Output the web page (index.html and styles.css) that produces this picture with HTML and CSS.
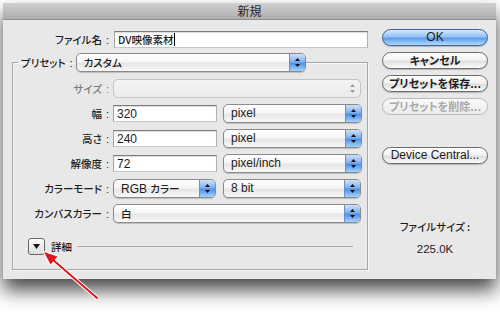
FILE: index.html
```html
<!DOCTYPE html>
<html lang="ja">
<head>
    <meta charset="UTF-8">
    <meta name="viewport" content="width=device-width, initial-scale=1.0">
    <title>新規</title>
    <link rel="stylesheet" href="styles.css">
</head>
<body>
    <div class="page">
        <div class="window">
            <div class="titlebar">新規</div>
            <div class="content">
                <div class="main">
                    <div class="name-row">
                        <label class="lbl" for="filename">ファイル名<b>:</b></label>
                        <div class="field name" id="filename"><span class="jp">DV映像素材</span><span class="caret"></span></div>
                    </div>

                    <fieldset class="group">
                        <legend>
                            <span class="lbl preset-lbl">プリセット<b>:</b></span>
                            <div class="popup preset"><span class="val jp">カスタム</span><span class="arrows"><svg width="5" height="9" viewBox="0 0 5 9"><polygon points="2.5,0 5,3 0,3" /><polygon points="0,6 5,6 2.5,9" /></svg></span></div>
                        </legend>

                        <div class="row">
                            <span class="lbl dim">サイズ<b>:</b></span>
                            <div class="popup full disabled"><span class="val"></span><span class="arrows"><svg width="5" height="9" viewBox="0 0 5 9"><polygon points="2.5,0 5,3 0,3" /><polygon points="0,6 5,6 2.5,9" /></svg></span></div>
                        </div>
                        <div class="row">
                            <span class="lbl">幅<b>:</b></span>
                            <div class="field num">320</div>
                            <div class="popup unit"><span class="val">pixel</span><span class="arrows"><svg width="5" height="9" viewBox="0 0 5 9"><polygon points="2.5,0 5,3 0,3" /><polygon points="0,6 5,6 2.5,9" /></svg></span></div>
                        </div>
                        <div class="row">
                            <span class="lbl">高さ<b>:</b></span>
                            <div class="field num">240</div>
                            <div class="popup unit"><span class="val">pixel</span><span class="arrows"><svg width="5" height="9" viewBox="0 0 5 9"><polygon points="2.5,0 5,3 0,3" /><polygon points="0,6 5,6 2.5,9" /></svg></span></div>
                        </div>
                        <div class="row">
                            <span class="lbl">解像度<b>:</b></span>
                            <div class="field num">72</div>
                            <div class="popup unit"><span class="val">pixel/inch</span><span class="arrows"><svg width="5" height="9" viewBox="0 0 5 9"><polygon points="2.5,0 5,3 0,3" /><polygon points="0,6 5,6 2.5,9" /></svg></span></div>
                        </div>
                        <div class="row">
                            <span class="lbl">カラーモード<b>:</b></span>
                            <div class="popup mode"><span class="val">RGB <span class="jp">カラー</span></span><span class="arrows"><svg width="5" height="9" viewBox="0 0 5 9"><polygon points="2.5,0 5,3 0,3" /><polygon points="0,6 5,6 2.5,9" /></svg></span></div>
                            <div class="popup unit bits"><span class="val">8 bit</span><span class="arrows"><svg width="5" height="9" viewBox="0 0 5 9"><polygon points="2.5,0 5,3 0,3" /><polygon points="0,6 5,6 2.5,9" /></svg></span></div>
                        </div>
                        <div class="row">
                            <span class="lbl">カンバスカラー<b>:</b></span>
                            <div class="popup full"><span class="val jp">白</span><span class="arrows"><svg width="5" height="9" viewBox="0 0 5 9"><polygon points="2.5,0 5,3 0,3" /><polygon points="0,6 5,6 2.5,9" /></svg></span></div>
                        </div>

                        <div class="detail">
                            <div class="disclose"><svg width="7" height="5" viewBox="0 0 7 5"><polygon points="0,0 7,0 3.5,5" /></svg></div>
                            <span class="jp">詳細</span>
                            <div class="rule"></div>
                        </div>
                    </fieldset>
                </div>

                <div class="side">
                    <div class="btn default">OK</div>
                    <div class="btn jp">キャンセル</div>
                    <div class="btn jp">プリセットを保存...</div>
                    <div class="btn jp disabled">プリセットを削除...</div>
                    <div class="btn device">Device Central...</div>
                    <div class="filesize">
                        <div class="jp">ファイルサイズ :</div>
                        <div class="size">225.0K</div>
                    </div>
                </div>
            </div>
        </div>

        <!-- annotation arrow -->
        <svg class="pointer" width="500" height="312" viewBox="0 0 500 312">
            <line x1="97" y1="298" x2="52" y2="259" stroke="#fff" stroke-width="4" stroke-linecap="round" />
            <polygon points="44,252 57.5,256.5 50.5,264.5" fill="#fff" stroke="#fff" stroke-width="2" />
            <line x1="97" y1="298" x2="52" y2="259" stroke="#e3141e" stroke-width="2" stroke-linecap="round" />
            <polygon points="44,252 57.5,256.5 50.5,264.5" fill="#e3141e" />
        </svg>
    </div>
</body>
</html>
```

FILE: styles.css
```css
body {
    margin: 0;
    background: #fff;
    font-family: "Liberation Sans", "Noto Sans CJK JP", sans-serif;
    font-size: 12px;
    color: #1c1c1c;
}
.jp, .lbl {
    font-family: "Noto Sans CJK JP", sans-serif;
    font-size: 10.5px;
    font-weight: 500;
    font-feature-settings: "palt";
}
.lbl b {
    font-family: "Liberation Sans", sans-serif;
    font-weight: normal;
    font-size: 11px;
    margin-left: 4px;
}
.page {
    position: relative;
    width: 500px;
    height: 312px;
    padding: 3px 0 0 3px;
    box-sizing: border-box;
    overflow: hidden;
}
.window {
    width: 493px;
    height: 276px;
    background: #e8e8e8;
    box-shadow: 0 11px 18px rgba(0, 0, 0, 0.72);
    display: flex;
    flex-direction: column;
}
.titlebar {
    height: 16px;
    line-height: 16px;
    border-bottom: 1px solid #8e8e8e;
    background: linear-gradient(#d0d0d0, #adadad);
    text-align: center;
    font-family: "Noto Sans CJK JP", sans-serif;
    font-size: 12px;
    color: #262626;
}
.content {
    flex: 1;
    display: flex;
}
.main {
    width: 356px;
    padding-left: 9px;
}
.lbl {
    flex: none;
    width: 101px;
    padding-right: 4px;
    text-align: right;
    white-space: nowrap;
    box-sizing: border-box;
}
.name-row {
    display: flex;
    align-items: center;
    margin-top: 11px;
}
.field {
    height: 17px;
    line-height: 16px;
    padding: 0 3px;
    box-sizing: border-box;
    background: #fff;
    border: 1px solid;
    border-color: #7c7c7c #b0b0b0 #c6c6c6 #a4a4a4;
    box-shadow: inset 0 1px 1px rgba(0, 0, 0, 0.15);
    white-space: nowrap;
}
.field.name {
    width: 255px;
    margin-left: 1px;
    display: flex;
    align-items: center;
}
.caret {
    width: 1px;
    height: 13px;
    margin-left: 1px;
    background: #000;
}
.field.num {
    width: 104px;
}

/* group box */
.group {
    margin: 5px 0 0;
    padding: 0;
    width: 356px;
    height: 217px;
    box-sizing: border-box;
    border: 1px solid #a6a6a6;
    box-shadow: 1px 1px 0 #f7f7f7, inset 1px 1px 0 #f7f7f7;
}
.group legend {
    display: flex;
    align-items: center;
    padding: 0;
    margin-left: 5px;
}
.lbl.preset-lbl {
    width: auto;
    padding-left: 3px;
    padding-right: 3px;
}
.row {
    display: flex;
    align-items: center;
    gap: 6px;
    height: 19px;
    margin-top: 6px;
}
.row:first-of-type {
    margin-top: 7px;
}
.row .lbl {
    width: 100px;
    margin-right: -6px;
}
.lbl.dim {
    color: #7a7a7a;
}

/* popup menus */
.popup {
    display: flex;
    align-items: stretch;
    height: 19px;
    box-sizing: border-box;
    border: 1px solid #8a8a8a;
    border-radius: 5px;
    overflow: hidden;
    background: linear-gradient(#ffffff, #f6f6f6 45%, #e6e6e6 55%, #f8f8f8);
    box-shadow: 0 1px 1px rgba(0, 0, 0, 0.18);
}
.popup .val {
    flex: 1;
    padding-left: 7px;
    line-height: 17px;
    white-space: nowrap;
}
.popup .arrows {
    width: 15px;
    display: flex;
    align-items: center;
    justify-content: center;
    border-left: 1px solid #6b8fc6;
    background: linear-gradient(#cfe2fa, #7fb1ef 45%, #4f91e8 55%, #a3d3fc);
}
.popup .arrows polygon {
    fill: #111;
}
.popup.preset {
    width: 230px;
}
.popup.full {
    width: 248px;
}
.popup.unit {
    width: 139px;
}
.popup.mode {
    width: 103px;
}
.popup.bits {
    width: 138px;
    margin-left: 1px;
}
.popup.disabled {
    border-color: #c2c2c2;
    background: linear-gradient(#f3f3f3, #ececec);
    box-shadow: none;
}
.popup.disabled .arrows {
    border-left: 0;
    background: none;
}
.popup.disabled .arrows polygon {
    fill: #9a9a9a;
}

/* disclosure */
.detail {
    display: flex;
    align-items: center;
    margin: 15px 14px 0 15px;
}
.disclose {
    width: 17px;
    height: 17px;
    box-sizing: border-box;
    border: 1px solid #666;
    border-radius: 3px;
    background: linear-gradient(#fdfdfd, #dcdcdc);
    display: flex;
    align-items: center;
    justify-content: center;
}
.disclose polygon {
    fill: #111;
}
.detail .jp {
    margin-left: 6px;
}
.rule {
    flex: 1;
    height: 1px;
    margin-left: 5px;
    background: #a8a8a8;
}

/* buttons */
.side {
    width: 106px;
    margin-left: 14px;
    padding-top: 9px;
    display: flex;
    flex-direction: column;
    gap: 6px;
}
.btn {
    height: 17px;
    line-height: 15px;
    box-sizing: border-box;
    border: 1px solid #6c6c6c;
    border-radius: 9px;
    text-align: center;
    white-space: nowrap;
    background: linear-gradient(#ffffff, #f3f3f3 45%, #dfdfdf 55%, #fbfbfb);
    box-shadow: 0 1px 1px rgba(0, 0, 0, 0.22);
}
.btn.jp {
    font-size: 11px;
    font-weight: bold;
}
.btn.default {
    border-color: #3f619c;
    background: linear-gradient(#d9e9fc, #94c2f5 45%, #5e9deb 55%, #b0dbff);
}
.btn.disabled {
    color: #a9a9a9;
    border-color: #b9b9b9;
    background: linear-gradient(#f9f9f9, #ececec);
    box-shadow: none;
}
.btn.device {
    margin-top: 26px;
}
.filesize {
    margin-top: 46px;
    text-align: center;
    line-height: 22px;
}
.size {
    font-size: 11.5px;
}

.pointer {
    position: absolute;
    left: 0;
    top: 0;
    pointer-events: none;
}
```
